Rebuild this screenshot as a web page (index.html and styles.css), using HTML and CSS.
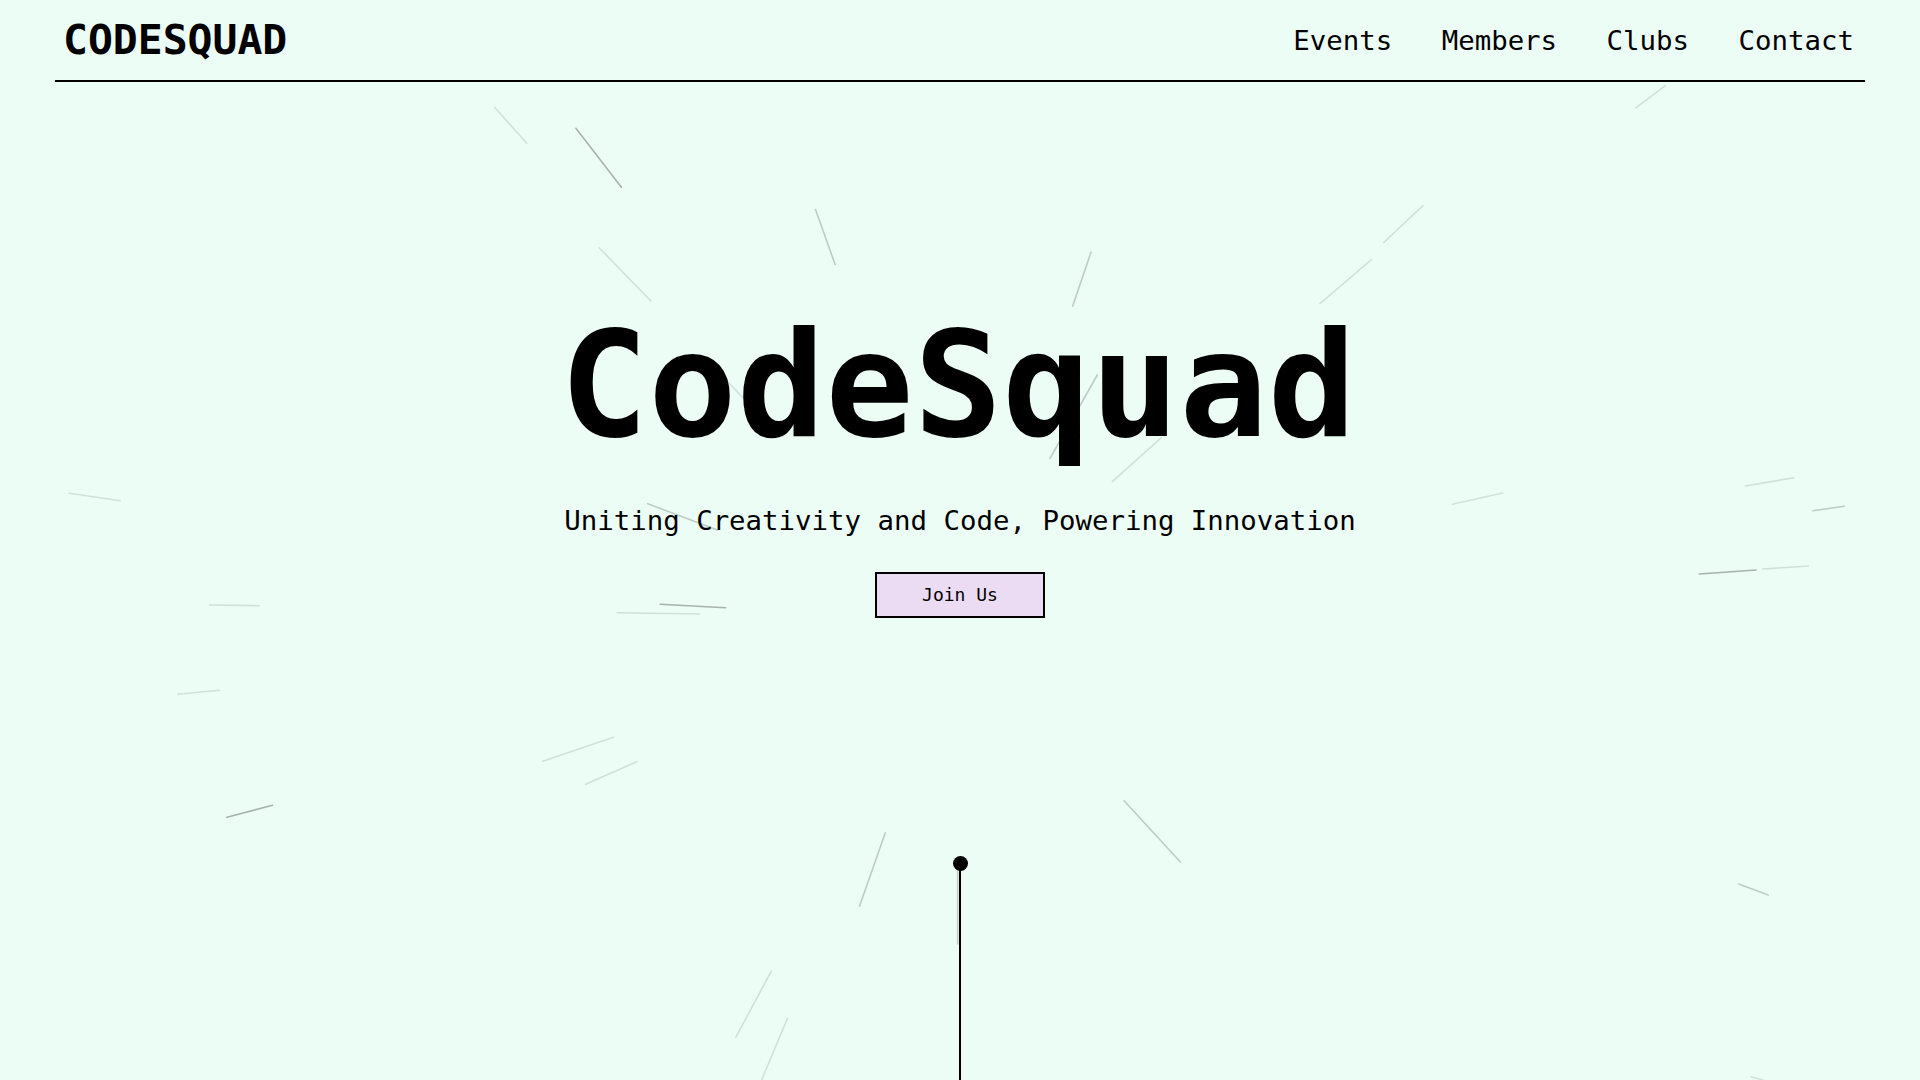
FILE: index.html
```html
<!DOCTYPE html>
<html lang="en">
<head>
<meta charset="utf-8">
<title>CodeSquad</title>
<link rel="stylesheet" href="styles.css">
</head>
<body>
<div class="page">
  <svg class="rays" width="1920" height="1080" viewBox="0 0 1920 1080" aria-hidden="true">
    <g class="ray-light">
      <line x1="494.6" y1="107.3" x2="526.8" y2="143.3"/>
      <line x1="599.1" y1="247.7" x2="650.9" y2="301"/>
      <line x1="1371.4" y1="259.6" x2="1320" y2="303.7"/>
      <line x1="1112.3" y1="481.7" x2="1161.3" y2="437.7"/>
      <line x1="617" y1="612.7" x2="699.5" y2="614"/>
      <line x1="1762.7" y1="569" x2="1808.3" y2="566"/>
      <line x1="1745.3" y1="486" x2="1794" y2="477.7"/>
      <line x1="1452.3" y1="504.3" x2="1502.7" y2="493"/>
      <line x1="69.3" y1="493.3" x2="120.2" y2="500.7"/>
      <line x1="209.4" y1="605" x2="259.3" y2="605.7"/>
      <line x1="177.9" y1="694.3" x2="219.6" y2="690.3"/>
      <line x1="542.9" y1="761.3" x2="613.2" y2="737.3"/>
      <line x1="585.5" y1="784.3" x2="636.9" y2="761.7"/>
      <line x1="1665.3" y1="85.7" x2="1635.9" y2="107.8"/>
      <line x1="1422.9" y1="205.7" x2="1383.7" y2="242.5"/>
      <line x1="771.4" y1="971" x2="735.9" y2="1037.2"/>
      <line x1="787.3" y1="1018.8" x2="761.6" y2="1080"/>
      <line x1="1751" y1="1077" x2="1763" y2="1080"/>
      <line x1="728" y1="382" x2="745" y2="400"/>
    </g>
    <g class="ray-mid">
      <line x1="815.5" y1="209.4" x2="835.1" y2="264.5"/>
      <line x1="1091" y1="252.2" x2="1072.7" y2="306.1"/>
      <line x1="1050" y1="458.3" x2="1097.3" y2="375"/>
      <line x1="647.6" y1="503.7" x2="717.4" y2="530"/>
      <line x1="1812.7" y1="510.7" x2="1844.3" y2="506.3"/>
      <line x1="1124.1" y1="800.8" x2="1180.4" y2="862"/>
      <line x1="885.3" y1="832.7" x2="859.6" y2="906.1"/>
      <line x1="1738.8" y1="884.1" x2="1768.2" y2="895.1"/>
      <line x1="957.7" y1="871.7" x2="957.7" y2="944"/>
    </g>
    <g class="ray-dark">
      <line x1="575.9" y1="128.3" x2="621.4" y2="187.3"/>
      <line x1="660.2" y1="604.3" x2="725.6" y2="607.7"/>
      <line x1="1699.3" y1="574" x2="1756" y2="570"/>
      <line x1="226.9" y1="817.3" x2="272.4" y2="805.3"/>
    </g>
  </svg>

  <header class="site-header">
    <div class="logo">CODESQUAD</div>
    <nav>
      <ul class="nav-list">
        <li><a href="#">Events</a></li>
        <li><a href="#">Members</a></li>
        <li><a href="#">Clubs</a></li>
        <li><a href="#">Contact</a></li>
      </ul>
    </nav>
  </header>

  <main class="hero">
    <h1 class="hero-title">CodeSquad</h1>
    <p class="hero-tagline">Uniting Creativity and Code, Powering Innovation</p>
    <button class="join-btn" type="button">Join Us</button>
    <div class="timeline">
      <span class="timeline-dot"></span>
      <span class="timeline-line"></span>
    </div>
  </main>
</div>
</body>
</html>
```

FILE: styles.css
```css
* {
  box-sizing: border-box;
}

html, body {
  margin: 0;
  padding: 0;
}

body {
  background: #ecfdf5;
  color: #000;
  font-family: "DejaVu Sans Mono", "Liberation Mono", monospace;
  overflow: hidden;
}

.page {
  position: relative;
  height: 100vh;
  display: flex;
  flex-direction: column;
  overflow: hidden;
}

.rays {
  position: absolute;
  left: 0;
  top: 0;
  z-index: 0;
  pointer-events: none;
}

.rays line {
  stroke-width: 1.6;
  stroke-linecap: round;
}

.ray-light line {
  stroke: rgba(120, 140, 130, 0.24);
}

.ray-mid line {
  stroke: rgba(110, 125, 118, 0.38);
}

.ray-dark line {
  stroke: rgba(95, 108, 102, 0.5);
}

.site-header {
  position: relative;
  z-index: 1;
  margin: 0 55px;
  padding: 16px 11px 16px 8px;
  display: flex;
  justify-content: space-between;
  align-items: center;
  border-bottom: 2px solid #000;
}

.logo {
  font-size: 41.4px;
  font-weight: bold;
}

.nav-list {
  list-style: none;
  margin: 0;
  padding: 0;
  display: flex;
  gap: 49.5px;
}

.nav-list a {
  color: #000;
  text-decoration: none;
  font-size: 27.4px;
}

.hero {
  position: relative;
  z-index: 1;
  flex: 1;
  display: flex;
  flex-direction: column;
  align-items: center;
  padding-top: 218.2px;
}

.hero-title {
  margin: 0 4px 0 0;
  font-size: 147px;
  font-weight: bold;
  line-height: normal;
}

.hero-tagline {
  margin: 33.8px 0 0;
  font-size: 27.4px;
  line-height: normal;
}

.join-btn {
  margin-top: 36px;
  padding: 10.5px 45.5px;
  font-family: "DejaVu Sans Mono", "Liberation Mono", monospace;
  font-size: 18px;
  color: #000;
  background: #ecdcf3;
  border: 2px solid #000;
  cursor: pointer;
}

.timeline {
  margin-top: 238.5px;
  flex: 1;
  display: flex;
  flex-direction: column;
  align-items: center;
}

.timeline-dot {
  width: 15px;
  height: 15px;
  border-radius: 50%;
  background: #000;
  flex: none;
}

.timeline-line {
  width: 2px;
  flex: 1;
  margin-top: -4px;
  background: #000;
}
```
